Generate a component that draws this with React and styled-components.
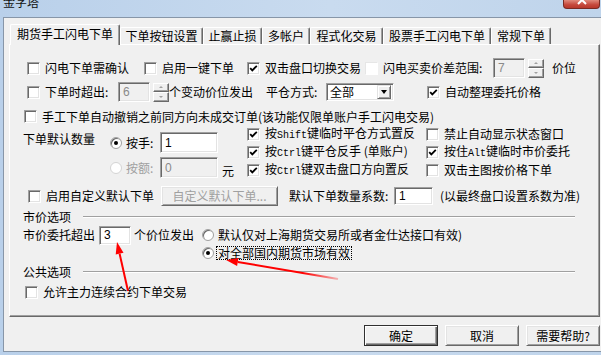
import React from "react";
import styled, { createGlobalStyle } from "styled-components";

const GlobalStyle = createGlobalStyle`
  html, body {
    margin: 0;
    padding: 0;
    background: #f0f0f0;
  }
  body {
    width: 601px;
    height: 355px;
    overflow: hidden;
    font-family: "Noto Sans CJK SC", "Liberation Sans", sans-serif;
    font-size: 12px;
    color: #000;
  }
`;

const Window = styled.div`
  position: relative;
  width: 601px;
  height: 355px;
  display: flex;
  flex-direction: column;
  background: linear-gradient(to right, #b9d0ea, #c9dbef 55%, #bfd4eb);
  overflow: hidden;
`;

const TitleBar = styled.div`
  flex: none;
  height: 17px;
  display: flex;
  justify-content: space-between;
  align-items: flex-start;
`;

const Title = styled.span`
  margin: -5px 0 0 3px;
  line-height: 14px;
  color: #111;
`;

const CloseBtn = styled.span`
  width: 37px;
  height: 9px;
  margin-right: 1px;
  box-sizing: border-box;
  border: 1px solid #7a2a22;
  border-top: none;
  border-radius: 0 0 4px 4px;
  background: linear-gradient(#e08a7c, #c5473a 60%, #b8382c);
  display: flex;
  justify-content: center;
  overflow: hidden;
`;

const Frame = styled.div`
  flex: 1;
  display: flex;
  padding: 0 0 3px 3px;
`;

const Client = styled.div`
  flex: 1;
  background: #f0f0f0;
  border: 1px solid #8796a8;
  border-right: none;
  padding-top: 6px;
  display: flex;
  flex-direction: column;
`;

const TabStrip = styled.div`
  flex: none;
  height: 20px;
  padding-left: 6px;
  display: flex;
  align-items: flex-end;
`;

const Tab = styled.div`
  flex: none;
  position: relative;
  z-index: ${(p) => (p.$active ? 2 : 1)};
  width: ${(p) => p.$w}px;
  height: ${(p) => (p.$active ? 21 : 17)}px;
  margin-bottom: ${(p) => (p.$active ? -1 : 0)}px;
  padding-bottom: ${(p) => (p.$active ? 2 : 0)}px;
  box-sizing: border-box;
  background: #f0f0f0;
  border-top: 1px solid #fff;
  border-left: 1px solid #fff;
  border-right: 1px solid #696969;
  box-shadow: inset -1px 0 #a0a0a0;
  border-radius: 2px 2px 0 0;
  display: flex;
  align-items: center;
  justify-content: center;
  line-height: 14px;
  white-space: nowrap;
`;

const Panel = styled.div`
  flex: none;
  margin-left: 5px;
  width: 591px;
  height: 273px;
  box-sizing: border-box;
  border-top: 1px solid #fff;
  border-left: 1px solid #fff;
  border-right: 1px solid #696969;
  border-bottom: 1px solid #696969;
  box-shadow: inset -1px -1px #a0a0a0;
  padding: 13px 0 0 13px;
  display: flex;
  flex-direction: column;
`;

const Row = styled.div`
  flex: none;
  display: flex;
  align-items: center;
  height: ${(p) => p.$h}px;
  margin-top: ${(p) => p.$mt || 0}px;
`;

const Slot = styled.div`
  flex: none;
  display: flex;
  align-items: center;
  height: ${(p) => (p.$h ? `${p.$h}px` : "auto")};
  width: ${(p) => (p.$w ? `${p.$w}px` : "auto")};
  margin-left: ${(p) => p.$ml || 0}px;
`;

const Text = styled.span`
  flex: none;
  white-space: nowrap;
  line-height: 14px;
  width: ${(p) => (p.$w ? `${p.$w}px` : "auto")};
  margin-left: ${(p) => p.$ml || 0}px;
  margin-top: ${(p) => p.$mt || 0}px;
  color: ${(p) => (p.$gray ? "#a0a0a0" : "#000")};
`;

const Latin = styled.span`
  font-family: "Liberation Mono", monospace;
  font-size: 10px;
`;

const Box = styled.span`
  flex: none;
  width: 13px;
  height: 13px;
  margin-right: 5px;
  box-sizing: border-box;
  background: #fff;
  border-top: 1px solid ${(p) => (p.$faint ? "#e6e6e6" : "#a0a0a0")};
  border-left: 1px solid ${(p) => (p.$faint ? "#e6e6e6" : "#a0a0a0")};
  border-right: 1px solid #fff;
  border-bottom: 1px solid #fff;
  box-shadow: ${(p) =>
    p.$faint ? "none" : "inset 1px 1px #696969, inset -1px -1px #e3e3e3"};
  display: flex;
  align-items: center;
  justify-content: center;
`;

const RadioDot = styled.span`
  flex: none;
  width: 12px;
  height: 12px;
  margin-right: ${(p) => (p.$gap != null ? p.$gap : 4)}px;
  box-sizing: border-box;
  border-radius: 50%;
  background: #fff;
  border: 1px solid ${(p) => (p.$disabled ? "#d4d4d4" : "#a0a0a0")};
  box-shadow: ${(p) => (p.$disabled ? "none" : "inset 1px 1px #696969")};
  display: flex;
  align-items: center;
  justify-content: center;
  &::after {
    content: "";
    width: 4px;
    height: 4px;
    border-radius: 50%;
    background: ${(p) => (p.$checked ? "#000" : "transparent")};
  }
`;

const Field = styled.span`
  flex: none;
  box-sizing: border-box;
  width: ${(p) => p.$w}px;
  height: ${(p) => p.$h || 20}px;
  background: ${(p) => (p.$disabled ? "#f0f0f0" : "#fff")};
  color: ${(p) => (p.$disabled ? "#8a8a8a" : "#000")};
  border-top: 1px solid #a0a0a0;
  border-left: 1px solid #a0a0a0;
  border-right: 1px solid #fff;
  border-bottom: 1px solid #fff;
  box-shadow: inset 1px 1px #696969, inset -1px -1px #e3e3e3;
  padding-left: 4px;
  display: flex;
  align-items: center;
  font-family: "Liberation Sans", sans-serif;
  font-size: 12px;
`;

const Spinner = styled.span`
  flex: none;
  width: 16px;
  height: 19px;
  margin-left: 3px;
  display: flex;
  flex-direction: column;
`;

const SpinPart = styled.span`
  flex: 1;
  box-sizing: border-box;
  background: #f0f0f0;
  border-top: 1px solid #fff;
  border-left: 1px solid #fff;
  border-right: 1px solid #696969;
  border-bottom: 1px solid #696969;
  box-shadow: inset -1px -1px #a0a0a0;
  display: flex;
  align-items: center;
  justify-content: center;
  &::after {
    content: "";
    border-left: 2px solid transparent;
    border-right: 2px solid transparent;
    ${(p) =>
      p.$down
        ? "border-top: 2px solid #a0a0a0;"
        : "border-bottom: 2px solid #a0a0a0;"}
  }
`;

const Select = styled.span`
  flex: none;
  width: 68px;
  height: 18px;
  box-sizing: border-box;
  background: #fff;
  border-top: 1px solid #a0a0a0;
  border-left: 1px solid #a0a0a0;
  border-right: 1px solid #fff;
  border-bottom: 1px solid #fff;
  box-shadow: inset 1px 1px #696969, inset -1px -1px #e3e3e3;
  padding: 2px 2px 2px 3px;
  display: flex;
  align-items: center;
  justify-content: space-between;
  line-height: 14px;
`;

const DropBtn = styled.span`
  width: 14px;
  height: 14px;
  box-sizing: border-box;
  background: #f0f0f0;
  border-top: 1px solid #e3e3e3;
  border-left: 1px solid #e3e3e3;
  border-right: 1px solid #696969;
  border-bottom: 1px solid #696969;
  box-shadow: inset 1px 1px #fff, inset -1px -1px #a0a0a0;
  display: flex;
  align-items: center;
  justify-content: center;
  &::after {
    content: "";
    border-left: 3.5px solid transparent;
    border-right: 3.5px solid transparent;
    border-top: 4px solid #000;
  }
`;

const Button = styled.span`
  flex: none;
  width: ${(p) => p.$w || 74}px;
  height: ${(p) => p.$h || 21}px;
  box-sizing: border-box;
  background: #f0f0f0;
  color: ${(p) => (p.$disabled ? "#a0a0a0" : "#000")};
  border: 1px solid;
  border-color: ${(p) =>
    p.$default ? "#303030" : "#fff #696969 #696969 #fff"};
  box-shadow: ${(p) =>
    p.$default
      ? "inset 1px 1px #fff, inset -1px -1px #696969, inset -2px -2px #a0a0a0"
      : "inset 1px 1px #e3e3e3, inset -1px -1px #a0a0a0"};
  display: flex;
  align-items: center;
  justify-content: center;
  line-height: 14px;
  white-space: nowrap;
`;

const Block = styled.div`
  flex: none;
  height: 54px;
  display: flex;
  align-items: flex-start;
`;

const RadioCol = styled.div`
  flex: none;
  width: 137px;
  padding-top: 7px;
  display: flex;
  flex-direction: column;
`;

const CheckCol = styled.div`
  flex: none;
  width: ${(p) => (p.$w ? `${p.$w}px` : "auto")};
  display: flex;
  flex-direction: column;
`;

const Rule = styled.span`
  flex: none;
  width: 492px;
  height: 0;
  border-top: 1px solid #a0a0a0;
  border-bottom: 1px solid #fff;
`;

const Focus = styled.span`
  border: 1px dotted #000;
  padding: 0 1px;
  line-height: 12px;
  white-space: nowrap;
`;

const ButtonRow = styled.div`
  flex: none;
  margin-top: 8px;
  padding-right: 1px;
  display: flex;
  justify-content: flex-end;
  gap: 7px;
`;

const Overlay = styled.svg`
  position: absolute;
  left: 0;
  top: 0;
  pointer-events: none;
  z-index: 10;
`;

function Tick() {
  return (
    <svg width="9" height="9" viewBox="0 0 9 9">
      <polyline
        points="1.2,4.2 3.3,6.4 7.8,1.8"
        fill="none"
        stroke="#000"
        strokeWidth="1.8"
      />
    </svg>
  );
}

function CheckItem({ w, ml, h, checked, faint, children }) {
  return (
    <Slot $w={w} $ml={ml} $h={h}>
      <Box $faint={faint}>{checked && <Tick />}</Box>
      <Text>{children}</Text>
    </Slot>
  );
}

const tabs = [
  { label: "期货手工闪电下单", w: 110, active: true },
  { label: "下单按钮设置", w: 83 },
  { label: "止赢止损", w: 59 },
  { label: "多帐户", w: 48 },
  { label: "程式化交易", w: 73 },
  { label: "股票手工闪电下单", w: 108 },
  { label: "常规下单", w: 60 },
];

export default function App() {
  return (
    <>
      <GlobalStyle />
      <Window>
        <TitleBar>
          <Title>金字塔</Title>
          <CloseBtn>
            <svg width="12" height="6" viewBox="0 0 12 6">
              <path d="M2 -4 L10 4 M10 -4 L2 4" stroke="#fff" strokeWidth="2" />
            </svg>
          </CloseBtn>
        </TitleBar>
        <Frame>
          <Client>
            <TabStrip>
              {tabs.map((t) => (
                <Tab key={t.label} $w={t.w} $active={t.active}>
                  {t.label}
                </Tab>
              ))}
            </TabStrip>
            <Panel>
              <Row $h={20}>
                <CheckItem ml={4} w={117}>闪电下单需确认</CheckItem>
                <CheckItem w={103}>启用一键下单</CheckItem>
                <CheckItem w={118} checked>双击盘口切换交易</CheckItem>
                <CheckItem w={128} faint>闪电买卖价差范围:</CheckItem>
                <Field $w={32} $disabled>7</Field>
                <Spinner>
                  <SpinPart />
                  <SpinPart $down />
                </Spinner>
                <Text $ml={8}>价位</Text>
              </Row>
              <Row $h={20} $mt={4}>
                <CheckItem ml={4} w={91}>下单时超出:</CheckItem>
                <Field $w={32} $disabled>6</Field>
                <Spinner>
                  <SpinPart />
                  <SpinPart $down />
                </Spinner>
                <Text $w={97}>个变动价位发出</Text>
                <Text $w={60}>平仓方式:</Text>
                <Select>
                  全部
                  <DropBtn />
                </Select>
                <CheckItem ml={33} checked>自动整理委托价格</CheckItem>
              </Row>
              <Row $h={17} $mt={6}>
                <CheckItem ml={1}>
                  手工下单自动撤销之前同方向未成交订单(该功能仅限单账户手工闪电交易)
                </CheckItem>
              </Row>
              <Block>
                <Text $w={87} $mt={7}>下单默认数量</Text>
                <RadioCol>
                  <Slot $h={21}>
                    <RadioDot $checked />
                    <Text $w={34}>按手:</Text>
                    <Field $w={58} $h={21}>1</Field>
                  </Slot>
                  <Slot $h={21} style={{ marginTop: 4 }}>
                    <RadioDot $disabled />
                    <Text $w={34} $gray>按额:</Text>
                    <Field $w={58} $h={21} $disabled>0</Field>
                    <Text $ml={4} $mt={6}>元</Text>
                  </Slot>
                </RadioCol>
                <CheckCol $w={179}>
                  <CheckItem h={18} checked>
                    按<Latin>Shift</Latin>键临时平仓方式置反
                  </CheckItem>
                  <CheckItem h={18} checked>
                    按<Latin>Ctrl</Latin>键平仓反手 (单账户)
                  </CheckItem>
                  <CheckItem h={18} checked>
                    按<Latin>Ctrl</Latin>键双击盘口方向置反
                  </CheckItem>
                </CheckCol>
                <CheckCol>
                  <CheckItem h={18}>禁止自动显示状态窗口</CheckItem>
                  <CheckItem h={18} checked>
                    按住<Latin>Alt</Latin>键临时市价委托
                  </CheckItem>
                  <CheckItem h={18}>双击主图按价格下单</CheckItem>
                </CheckCol>
              </Block>
              <Row $h={20} $mt={7}>
                <CheckItem ml={5} w={133}>启用自定义默认下单</CheckItem>
                <Button $w={117} $h={20} $disabled>自定义默认下单...</Button>
                <Text $ml={11} $w={105}>默认下单数量系数:</Text>
                <Field $w={39} $h={18}>1</Field>
                <Text $ml={7}>(以最终盘口设置系数为准)</Text>
              </Row>
              <Row $h={14} $mt={4}>
                <Text $w={60}>市价选项</Text>
                <Rule />
              </Row>
              <Row $h={20} $mt={1}>
                <Text $w={76}>市价委托超出</Text>
                <Field $w={32} $h={19}>3</Field>
                <Text $ml={3} $w={68}>个价位发出</Text>
                <RadioDot />
                <Text>默认仅对上海期货交易所或者金仕达接口有效)</Text>
              </Row>
              <Row $h={14} $mt={1}>
                <Slot $ml={179}>
                  <RadioDot $checked $gap={2} />
                  <Focus>对全部国内期货市场有效</Focus>
                </Slot>
              </Row>
              <Row $h={14} $mt={5}>
                <Text $w={60}>公共选项</Text>
                <Rule />
              </Row>
              <Row $h={14} $mt={6}>
                <CheckItem ml={2}>允许主力连续合约下单交易</CheckItem>
              </Row>
            </Panel>
            <ButtonRow>
              <Button $default>确定</Button>
              <Button>取消</Button>
              <Button>需要帮助?</Button>
            </ButtonRow>
          </Client>
        </Frame>
        <Overlay width="601" height="355" viewBox="0 0 601 355">
          <defs>
            <linearGradient id="fade" gradientUnits="userSpaceOnUse" x1="338" y1="279" x2="238" y2="262">
              <stop offset="0" stopColor="#ff0000" stopOpacity="0.25" />
              <stop offset="0.35" stopColor="#ff0000" stopOpacity="1" />
            </linearGradient>
          </defs>
          <line x1="128" y1="291" x2="119.6" y2="253.7" stroke="#ff0000" strokeWidth="2" />
          <polygon points="117,242 123.5,252.8 115.7,254.6" fill="#ff0000" />
          <line x1="338" y1="279" x2="237.8" y2="262" stroke="url(#fade)" strokeWidth="2" />
          <polygon points="226,260 238.5,258.1 237.1,265.9" fill="#ff0000" />
        </Overlay>
      </Window>
    </>
  );
}
